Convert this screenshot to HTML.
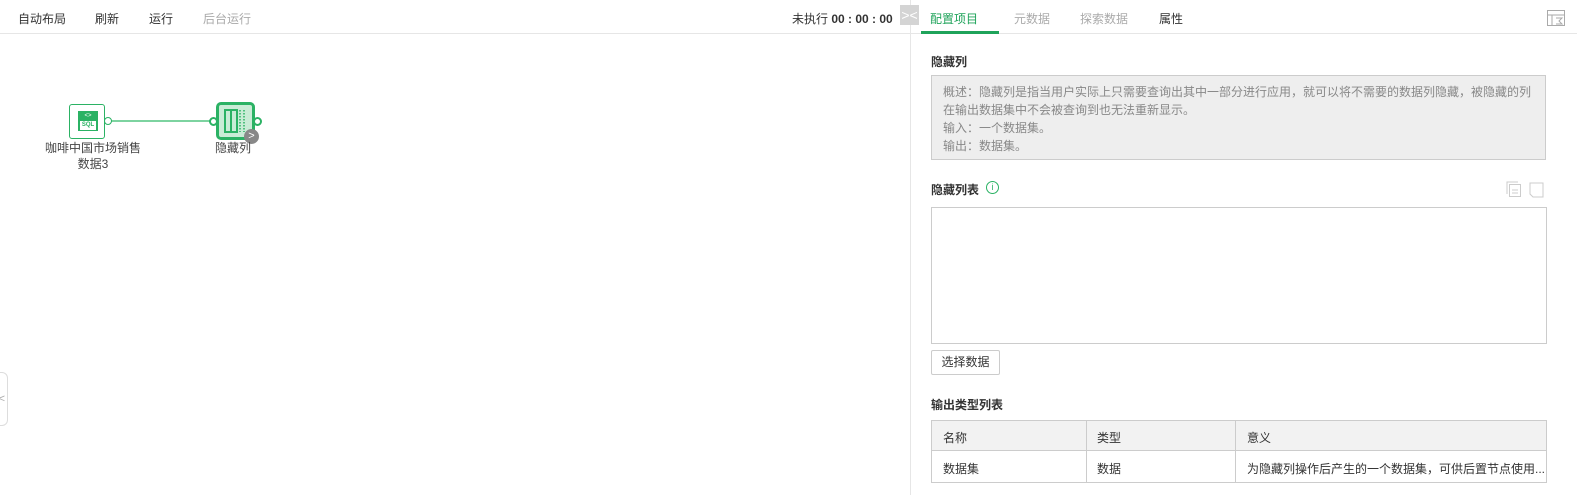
<!DOCTYPE html>
<html><head><meta charset="utf-8"><style>
*{margin:0;padding:0;box-sizing:border-box}
body{width:1577px;height:495px;background:#fff;font-family:"Liberation Sans","Noto Sans CJK SC",sans-serif;font-size:12px;color:#333;position:relative;overflow:hidden}
.a{position:absolute;white-space:nowrap}
</style></head><body>
<div class="a" style="left:0;top:33px;width:910px;height:1px;background:#e6e6e6"></div>
<div class="a" style="left:910px;top:0;width:1px;height:495px;background:#e6e6e6"></div>
<div class="a" style="left:910px;top:33px;width:667px;height:1px;background:#e6e6e6"></div>
<div class="a" style="left:18px;top:10px;color:#333">自动布局</div>
<div class="a" style="left:95px;top:10px">刷新</div>
<div class="a" style="left:149px;top:10px">运行</div>
<div class="a" style="left:203px;top:10px;color:#aaa">后台运行</div>
<div class="a" style="left:792px;top:10px">未执行 <b>00 : 00 : 00</b></div>
<div class="a" style="left:900px;top:5px;width:19px;height:20px;background:#d4d4d4;color:#fff;font-size:14px;line-height:20px;text-align:center">&gt;&lt;</div>
<div class="a" style="left:930px;top:10px;color:#1fa35a">配置项目</div>
<div class="a" style="left:921px;top:31px;width:78px;height:3px;background:#1fa35a"></div>
<div class="a" style="left:1014px;top:10px;color:#aaa">元数据</div>
<div class="a" style="left:1080px;top:10px;color:#aaa">探索数据</div>
<div class="a" style="left:1159px;top:10px">属性</div>
<svg class="a" style="left:1547px;top:10px" width="18" height="16"><g fill="none" stroke="#aaa"><rect x="0.5" y="0.5" width="17" height="15"/><path d="M0 5h17M5 5v11M9 8h6l-3 3 3 3h-6"/></g></svg>
<!-- nodes -->
<div class="a" style="left:105px;top:120px;width:110px;height:2px;background:#7dd3a0"></div>
<div class="a" style="left:69px;top:104px;width:36px;height:35px;border:1px solid #2bb264;border-radius:3px;background:#fff"></div>
<div class="a" style="left:78px;top:111px;width:20px;height:20px;background:#2bb264;color:#fff;font-size:6px;text-align:center;line-height:9px;padding-top:1px">&lt;&gt;<div style="background:#fff;color:#2bb264;margin:0 2px;font-weight:bold;font-size:6px;line-height:9px">SQL</div></div>
<div class="a" style="left:104px;top:117px;width:8px;height:8px;border:1px solid #2bb264;border-radius:50%;background:#fff"></div>
<div class="a" style="left:216px;top:102px;width:39px;height:38px;border:3px solid #2bb264;border-radius:5px;background:#c9ecd6"></div>
<svg class="a" style="left:224px;top:109px" width="24" height="24"><g fill="none" stroke="#2bb264" stroke-width="2"><rect x="1" y="1" width="6" height="22"/><rect x="7" y="1" width="6" height="22"/><path d="M16 1v22M20 1v22" stroke-dasharray="1.5 1.5" stroke-width="1.5"/></g></svg>
<div class="a" style="left:209px;top:117px;width:9px;height:9px;border:2px solid #2bb264;border-radius:50%;background:#fff"></div>
<div class="a" style="left:253px;top:117px;width:9px;height:9px;border:2px solid #2bb264;border-radius:50%;background:#fff"></div>
<div class="a" style="left:244px;top:129px;width:15px;height:15px;border-radius:50%;background:#888;color:#fff;font-size:11px;line-height:14px;text-align:center">&gt;</div>
<div class="a" style="left:45px;top:140px;width:96px;text-align:center;line-height:16px;color:#444">咖啡中国市场销售<br>数据3</div>
<div class="a" style="left:215px;top:140px;line-height:16px;color:#444">隐藏列</div>
<div class="a" style="left:-6px;top:372px;width:14px;height:54px;border:1px solid #ddd;border-radius:6px;background:#fff;color:#aaa;font-size:11px;line-height:52px;text-align:right;padding-right:2px">&lt;</div>
<!-- right panel -->
<div class="a" style="left:931px;top:53px;font-weight:bold">隐藏列</div>
<div class="a" style="left:931px;top:75px;width:615px;height:85px;background:#eee;border:1px solid #ccc"></div>
<div class="a" style="left:943px;top:83px;color:#888;line-height:18px">概述：隐藏列是指当用户实际上只需要查询出其中一部分进行应用，就可以将不需要的数据列隐藏，被隐藏的列<br>在输出数据集中不会被查询到也无法重新显示。<br>输入：一个数据集。<br>输出：数据集。</div>
<div class="a" style="left:931px;top:181px;font-weight:bold">隐藏列表</div>
<div class="a" style="left:986px;top:181px;width:13px;height:13px;border:1px solid #2bb264;border-radius:50%;color:#2bb264;font-size:9px;line-height:11px;text-align:center">i</div>
<svg class="a" style="left:1506px;top:181px" width="40" height="17"><g fill="none" stroke="#ccc"><rect x="3.5" y="3.5" width="11" height="12"/><path d="M1 13V1h11M6 9h6M6 12h6"/><path d="M24 2h13v14h-10l-3-3z"/></g></svg>
<div class="a" style="left:931px;top:207px;width:616px;height:137px;border:1px solid #ccc"></div>
<div class="a" style="left:931px;top:350px;width:69px;height:25px;border:1px solid #ccc;border-radius:2px;text-align:center;line-height:23px">选择数据</div>
<div class="a" style="left:931px;top:396px;font-weight:bold">输出类型列表</div>
<div class="a" style="left:931px;top:420px;width:616px;height:63px;border:1px solid #ccc"></div>
<div class="a" style="left:932px;top:421px;width:614px;height:30px;background:#f2f2f2;border-bottom:1px solid #ccc"></div>
<div class="a" style="left:1086px;top:420px;width:1px;height:63px;background:#ccc"></div>
<div class="a" style="left:1235px;top:420px;width:1px;height:63px;background:#ccc"></div>
<div class="a" style="left:943px;top:429px">名称</div>
<div class="a" style="left:1097px;top:429px">类型</div>
<div class="a" style="left:1247px;top:429px">意义</div>
<div class="a" style="left:943px;top:460px">数据集</div>
<div class="a" style="left:1097px;top:460px">数据</div>
<div class="a" style="left:1247px;top:460px">为隐藏列操作后产生的一个数据集，可供后置节点使用...</div>
</body></html>
